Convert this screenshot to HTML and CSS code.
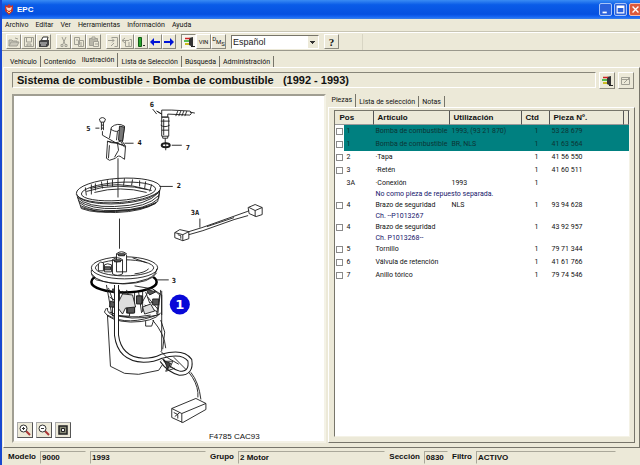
FILE: index.html
```html
<!DOCTYPE html>
<html lang="es">
<head>
<meta charset="utf-8">
<title>EPC</title>
<link rel="stylesheet" href="styles.css">
</head>
<body>
<header class="titlebar">
  <svg class="logo" viewBox="0 0 10 11"><path d="M1 1l2 1 2-2 2 2 2-1v6L5 11 1 7z" fill="#c8342a"/><path d="M2 3l3 1 3-1-1 3-2 1-2-1z" fill="#f3d9c8"/><path d="M3 7l2 2 2-2" stroke="#ffd36b" fill="none"/></svg>
  <h1>EPC</h1>
  <div class="winbtns">
    <button aria-label="Minimizar"><svg viewBox="0 0 13 13"><path d="M3 9h5v2H3z" fill="#fff"/></svg></button>
    <button aria-label="Maximizar"><svg viewBox="0 0 13 13"><path d="M2.500 2.500h8v8h-8zM2 4h9" stroke="#fff" stroke-width="1.300" fill="none"/></svg></button>
    <button class="close" aria-label="Cerrar"><svg viewBox="0 0 13 13"><path d="M3 3l7 7M10 3l-7 7" stroke="#fff" stroke-width="1.600"/></svg></button>
  </div>
</header>
<nav class="menu">
  <button>Archivo</button><button>Editar</button><button>Ver</button><button>Herramientas</button><button>Información</button><button>Ayuda</button>
</nav>
<div class="toolbar">
  <div class="group">
    <button aria-label="Abrir"><svg viewBox="0 0 12 12"><path d="M1 10V4h3l1 1h4v2M1 10l2-4h8l-2 4zM7 2l3 1" stroke="#a09f94" fill="#c9c7ba"/></svg></button>
    <button aria-label="Guardar"><svg viewBox="0 0 12 12"><path d="M1.500 1.500h9v9h-9zM3.500 2v4h5V2M4 8h4v2H4z" stroke="#a09f94" fill="none"/></svg></button>
    <button aria-label="Imprimir"><svg viewBox="0 0 12 12"><path d="M3 5l2-4h5L9 5" fill="#fff" stroke="#333"/><path d="M1 5l2-1h8v5l-2 2H1z" fill="#444"/><path d="M2 7h7M3 9h5" stroke="#ddd"/></svg></button>
  </div>
  <div class="group">
    <button aria-label="Cortar"><svg viewBox="0 0 12 12"><path d="M4 1l3 7M8 1L5 8M3 8.500h2v2H3zM7 8.500h2v2H7z" stroke="#a09f94" fill="none"/></svg></button>
    <button aria-label="Copiar"><svg viewBox="0 0 12 12"><path d="M1.500 1.500h5v7h-5zM5.500 4.500h5v6h-5zM3 4h2M7 7h2M7 9h2" stroke="#a09f94" fill="none"/></svg></button>
    <button aria-label="Pegar"><svg viewBox="0 0 12 12"><path d="M1.500 2.500h8v7h-8z" stroke="#a09f94" fill="#b9b7aa"/><path d="M4 1h3v2H4zM5.500 5.500h5v5h-5zM7 8h3" stroke="#a09f94" fill="#ece9d8"/></svg></button>
  </div>
  <div class="group wide">
    <button aria-label="Añadir"><svg viewBox="0 0 12 12"><path d="M4.500 1.500h6v9h-3M1 4.500h6M5 2.500l2 2-2 2M7 7l-3 3" stroke="#a09f94" fill="none"/></svg></button>
    <button aria-label="Quitar"><svg viewBox="0 0 12 12"><path d="M4.500 5v5.500h6v-7h-2M8 4.500H1M4 2L1 4.500 4 7M7 7h2M7 9h2" stroke="#a09f94" fill="none"/></svg></button>
    <button aria-label="Marcar"><svg viewBox="0 0 12 12"><path d="M3.500 1.500h3v9h-3z" fill="#27a52b" stroke="#145c17"/><path d="M8 9.500h2" stroke="#333"/></svg></button>
    <button aria-label="Anterior"><svg viewBox="0 0 12 12"><path d="M1 6l4-4v3h6v2H5v3z" fill="#0014d6"/></svg></button>
    <button aria-label="Siguiente"><svg viewBox="0 0 12 12"><path d="M11 6L7 2v3H1v2h6v3z" fill="#0014d6"/></svg></button>
  </div>
  <div class="group">
    <button class="pressed" aria-label="Salida"><svg viewBox="0 0 12 12"><path d="M6 2l4-1v10l-4-2z" fill="#333"/><path d="M2 2.500h5" stroke="#c22" stroke-width="1.500"/><path d="M1 5h5" stroke="#2a2" stroke-width="1.500"/><path d="M2 8h4" stroke="#cb2" stroke-width="2"/><path d="M8 10.500h4" stroke="#222"/></svg></button>
    <button class="tiny">VIN</button>
    <button class="tiny"><sup>D</sup>M<sub>S</sub></button>
  </div>
  <select aria-label="Idioma"><option>Español</option></select>
  <button class="help" aria-label="Ayuda">?</button>
  <i class="tail"></i>
</div>
<nav class="tabs">
  <button>Vehículo</button><button class="before">Contenido</button><button class="active">Ilustración</button><button>Lista de Selección</button><button>Búsqueda</button><button>Administración</button>
</nav>
<main>
  <div class="heading">
    <h2>Sistema de combustible - Bomba de combustible &nbsp; (1992 - 1993)</h2>
    <button aria-label="Salida"><svg viewBox="0 0 12 12"><path d="M6 2l4-1v10l-4-2z" fill="#333"/><path d="M2 2.500h5" stroke="#c22" stroke-width="1.500"/><path d="M1 5h5" stroke="#2a2" stroke-width="1.500"/><path d="M2 8h4" stroke="#cb2" stroke-width="2"/><path d="M8 10.500h4" stroke="#222"/></svg></button>
    <button aria-label="Nota"><svg viewBox="0 0 12 12"><path d="M1.500 2.500h8v7h-8zM1 4.500h8M4 8l6-6" stroke="#a09f94" fill="none"/></svg></button>
  </div>
  <div class="content">
    <figure>
      <svg class="drawing" viewBox="14 96 309 343" role="img" aria-label="Bomba de combustible">
        <g fill="none" stroke="#1c1c1c" stroke-width=".9">
          <!-- screw and cap -->
          <path d="M99 119q3-3 6 0l-1 3h-4zM101 122v8M103 122v8M101 125h2M101 128h2M102 131v4l14 8 6 2"/>
          <path d="M109 138l2-11q6-5 13-1l-2 15M110 129q5 3 7 2l7-4M117 131l-1 9M107 141q8 4 14-1l4 6-1 13-3-2q-3-3-6 1l-6 2-3-2 1-15zM109 145l-1 13M117 143l1 7-4 7M107 141l10 2 8 3M120 141l4 6"/>
          <path d="M119 126l-1 14 4 1 2-14z" fill="#777"/>
          <path d="M117.500 158v39M119 218v30M95 128h4M124 143h9"/>
          <!-- elbow valve -->
          <path d="M156 111l5 3v-4h10l18 1q3 2 0 4l-22-1v3h-6v-3zM161 117h7v19h-7zM160 121h9M160 125q4 3 9 0M161 130h7M162 136v2h5v-2M164.500 138v6M177 111l-2 5M180 111l-2 5M183 111l-2 5M186 111l-2 5"/>
          <path d="M163 119v16M189 112l5 1M152 109l4 5M171 145h10"/>
          <ellipse cx="165" cy="145" rx="4" ry="2" stroke-width="2"/>
          <path d="M165 142v8"/>
          <!-- collar -->
          <ellipse cx="118" cy="190" rx="42" ry="12" transform="rotate(-4 118 190)"/>
          <ellipse cx="118" cy="191" rx="37" ry="9" transform="rotate(-4 118 191)"/>
          <path d="M76 194q3 7 23 9 22 2 45-4 12-4 15-9l-1 8M77 197q10 10 37 9 33-1 44-14M78 200q12 9 38 8 31-1 42-13M79 202q10 9 36 8 32-1 43-12M80 205q13 7 35 7 28-1 41-10M81 207q14 5 34 4 25-1 40-8"/>
          <path d="M77 196l4 12q16 6 36 2 26 0 40-9l2-11"/>
          <path d="M85 187l1 8M91 184v10M95 183v7M101 181l1 7M107 180v6M112 179v7M124 178l-1 7M132 179l-1 6M139 180v6M145 181l-1 7M151 184l-2 7M90 188q27-8 57 1M86 191q30-10 65-1M94 192q26-7 52 0M159 186h13"/>
          <!-- cable -->
          <path d="M174 232l5-3 9 2v7l-6 2-8-3zM174 232l8 2v6M182 234l6-3M177 234l3 1v3M247 207l7-3 7 3v7l-6 2-7-3zM248 207l6 3 7-3M254 210v6M188 231l13-4 45-16 2-1M188 234l14-4 31-11 14-4M206 226l27-9M199 218v9"/>
          <!-- seal ring and pump flange -->
          <ellipse cx="123.500" cy="281" rx="32.500" ry="10.500" stroke="#000" stroke-width="2.500"/>
          <path d="M91 267v6q7 10 33 10 26-1 33-11v-5z" fill="#fff" stroke="none"/>
          <ellipse cx="124" cy="267" rx="33" ry="11" fill="#fff"/>
          <path d="M91 269q-1 6 5 10 27 8 51-1 9-4 9-10M91 273q7 10 33 10 26-1 32-11"/>
          <ellipse cx="124" cy="267" rx="29" ry="8"/>
          <path d="M116 253v18h10v-17M116 253q5-4 10 0-5 3-10 0M112 259v14q5 3 10 0v-14q-5-4-10 0 5 4 10 0M98 263v7h5v-8q-3-2-5 1M104 264v7h7v-7q-4-2-7 0M132 257l14 5M134 273q10-1 14-5" fill="#fff"/>
          <path d="M118 253h6v2h-6zM114 259h6v2h-6zM104 266h6v3h-6z" fill="#666"/>
          <path d="M156 279h12"/>
          <!-- pump mechanism -->
          <path d="M106 284l5 28q18 9 46 2l3-25M108 287l7 20M119 289v17M122 290v10l7 7M126 289l8 22M134 292v19M138 291l3 21M142 291v20M148 290l-8 14M152 288l7 6-3 19M147 296l10 12M109 296l11 7h11M112 306h17v9h-17zM126 304h7v8h-7zM136 295h6v7h-6zM145 291l4 11 8-1M144 304l13 7M134 285l18 3 9 6v20"/>
          <path d="M127 306h7v6h-7zM136 295h5v8h-5zM152 298h6v6h-6zM110 300l5 2v4h-6zM145 288l10 3-6 3zM112 288l7 1v3h-6z" fill="#555"/>
          <path d="M122 293l10 1 3 12-10 1-3 6-6-8zM142 306l8-3 4 7-10 3z" fill="#ddd"/>
          <path d="M106 307l-2 4q5 9 26 10 23 0 30-9M107 307q-1 6 10 9M109 311q15 8 41 3M145 320v5h6l2-6M107 314q20 12 52-1"/>
          <!-- reservoir -->
          <path d="M107 314l3 51 14 7 14 1 20-4 4-6M161 290v60M160 319l4 12-2 17"/>
          <path d="M116 284v50q3 24 27 25 10 0 18-4 21-6 28 4 2 13-10 13-11-3-18-13" stroke-width="5"/>
          <path d="M116 283v51q3 24 27 25 10 0 18-4 21-6 28 4 2 13-10 13-11-3-18-13" stroke="#fff" stroke-width="3"/>
          <path d="M160 350l6 6 12 7M162 358l5 7-2 5 9-3M163 360h9l-3 7M173 356l12 12"/>
          <path d="M164 360l6 2-3 6z" fill="#444"/>
          <path d="M152 319q12 14 13 28M188 371q8 10 9 20v5M190 371q8 10 10 27"/>
          <!-- float -->
          <path d="M171 407l24-10 10 5v6l-23 13-11-5zM171 407l10 5 24-10M181 412v9M173 411l4 2v4M174 415l5-4"/>
        </g>
        <g class="callouts">
          <text x="86" y="131">5</text><text x="137" y="145">4</text><text x="149" y="107">6</text><text x="185" y="150">7</text><text x="176" y="188">2</text><text x="190" y="214">3A</text><text x="171" y="282">3</text>
        </g>
        <circle cx="179" cy="303.500" r="10" fill="#0808d8"/>
        <text class="marker" x="179" y="308">1</text>
        <text class="code" x="208" y="437">F4785 CAC93</text>
      </svg>
      <div class="zoom">
        <button aria-label="Ampliar"><svg viewBox="0 0 12 12"><path d="M7 7l4 4" stroke="#a33" stroke-width="2"/><circle cx="4.500" cy="4.500" r="3.500" fill="#fff" stroke="#333"/><path d="M3 4.500h3M4.500 3v3" stroke="#333"/></svg></button>
        <button aria-label="Reducir"><svg viewBox="0 0 12 12"><path d="M7 7l4 4" stroke="#a33" stroke-width="2"/><circle cx="4.500" cy="4.500" r="3.500" fill="#fff" stroke="#333"/><path d="M3 4.500h3" stroke="#333"/></svg></button>
        <button aria-label="Ajustar"><svg viewBox="0 0 12 12"><path d="M2 2h8v8H2z" fill="#8a8c78" stroke="#222" stroke-width="1.500"/><path d="M4.500 4.500h3v3h-3z" fill="#eee" stroke="#222"/></svg></button>
      </div>
    </figure>
    <section class="side">
      <nav class="tabs sub">
        <button class="active">Piezas</button><button>Lista de selección</button><button>Notas</button>
      </nav>
      <div class="page">
        <div class="list">
          <table>
            <colgroup><col class="c-check"><col class="c-pos"><col class="c-art"><col class="c-use"><col class="c-qty"><col class="c-num"><col class="c-end"></colgroup>
            <thead><tr><th colspan="2">Pos</th><th>Artículo</th><th>Utilización</th><th>Ctd</th><th>Pieza Nº.</th><th></th></tr></thead>
            <tbody>
              <tr class="sel"><td><input type="checkbox" aria-label="Bomba de combustible 53 28 679"></td><td>1</td><td>Bomba de combustible</td><td>1993, (93 21 870)</td><td>1</td><td>53 28 679</td><td></td></tr>
              <tr class="sel"><td><input type="checkbox" aria-label="Bomba de combustible 41 63 564"></td><td>1</td><td>Bomba de combustible</td><td>BR, NLS</td><td>1</td><td>41 63 564</td><td></td></tr>
              <tr><td><input type="checkbox" aria-label="Tapa"></td><td>2</td><td>·Tapa</td><td></td><td>1</td><td>41 56 550</td><td></td></tr>
              <tr><td><input type="checkbox" aria-label="Retén"></td><td>3</td><td>·Retén</td><td></td><td>1</td><td>41 60 511</td><td></td></tr>
              <tr class="double"><td></td><td>3A</td><td>·Conexión<p>No como pieza de repuesto separada.</p></td><td>1993</td><td>1</td><td></td><td></td></tr>
              <tr class="double"><td><input type="checkbox" aria-label="Brazo de seguridad 93 94 628"></td><td>4</td><td>Brazo de seguridad<p>Ch. --P1013267</p></td><td>NLS</td><td>1</td><td>93 94 628</td><td></td></tr>
              <tr class="double"><td><input type="checkbox" aria-label="Brazo de seguridad 43 92 957"></td><td>4</td><td>Brazo de seguridad<p>Ch. P1013268--</p></td><td></td><td>1</td><td>43 92 957</td><td></td></tr>
              <tr><td><input type="checkbox" aria-label="Tornillo"></td><td>5</td><td>Tornillo</td><td></td><td>1</td><td>79 71 344</td><td></td></tr>
              <tr><td><input type="checkbox" aria-label="Válvula de retención"></td><td>6</td><td>Válvula de retención</td><td></td><td>1</td><td>41 61 766</td><td></td></tr>
              <tr><td><input type="checkbox" aria-label="Anillo tórico"></td><td>7</td><td>Anillo tórico</td><td></td><td>1</td><td>79 74 546</td><td></td></tr>
            </tbody>
          </table>
        </div>
      </div>
    </section>
  </div>
</main>
<footer>
  <b>Modelo</b><span class="model">9000</span><span class="year">1993</span><b>Grupo</b><span class="grow">2 Motor</span><b>Sección</b><span class="sec">0830</span><b>Filtro</b><span class="filter">ACTIVO</span>
</footer>
</body>
</html>
```
FILE: styles.css
```css
* { box-sizing: border-box; }
html { height: 100%; }
body {
  margin: 0; min-height: 100%; display: flex; flex-direction: column; overflow: hidden;
  background: #ece9d8; color: #111; border-left: 2px solid #1848d0; border-bottom: 2px solid #1238a8;
  font: 7px/11px Roboto, "Liberation Sans", sans-serif;
}
button { font: inherit; color: inherit; background: none; border: 0; padding: 0; margin: 0; white-space: nowrap; }
svg { display: block; }
h1, h2, p, figure { margin: 0; }

.titlebar {
  display: flex; align-items: center; gap: 3px; height: 19px; padding-left: 4px; margin-left: -2px;
  background: linear-gradient(#3a8cf4, #0a5ce8 25%, #0550e0 75%, #1464f4 88%, #3a80e8);
  color: #fff;
}
.logo { width: 10px; height: 11px; }
h1 { font: bold 8px/11px "Liberation Sans", sans-serif; }
.winbtns { display: flex; gap: 2px; margin-left: auto; margin-right: -2px; }
.winbtns button { width: 13px; height: 13px; border: 1px solid #a8c4f8; border-radius: 2px; background: #2c62dc; }
.winbtns .close { background: #dc5a3c; border-color: #f0c0b4; }
.winbtns svg { width: 11px; height: 11px; }

.menu { display: flex; gap: 7px; padding-left: 3px; height: 13px; border-bottom: 1px solid #c8c5b4; }
.toolbar { display: flex; align-items: center; gap: 5px; height: 19px; padding-left: 4px; border-top: 1px solid #fff; border-bottom: 1px solid #9a988c; }
.group { display: flex; }
.toolbar button, .heading button, .zoom button {
  display: grid; place-items: center; border: 1px solid; border-color: #fff #8c8a7e #8c8a7e #fff; background: #ece9d8;
}
.toolbar button { width: 15px; height: 15px; }
.group.wide button { width: 14px; }
.toolbar svg, .heading svg, .zoom svg { width: 12px; height: 12px; }
.toolbar .pressed { border-color: #8c8a7e #fff #fff #8c8a7e; background: #f8f6ee; }
.toolbar .tiny { display: block; font-size: 6px; }
.tiny sup, .tiny sub { font-size: 6px; line-height: 0; }
select {
  appearance: none; width: 88px; height: 14px; border: 1px solid; border-color: #77756a #fff #fff #77756a; border-radius: 0; padding: 0 1px; color: #222;
  font: 9px/12px "Liberation Sans", sans-serif;
  background: linear-gradient(#333, #333) right 3px top 5px / 5px 1px no-repeat, linear-gradient(#333, #333) right 4px top 6px / 3px 1px no-repeat, linear-gradient(#333, #333) right 5px top 7px / 1px 1px no-repeat, linear-gradient(#ece9d8, #ece9d8) right / 10px 100% no-repeat, #fff;
}
.toolbar .help { font: bold 11px/12px "Liberation Serif", serif; }
.tail { margin-left: 18px; height: 16px; border-left: 1px solid #d8d5c4; }

.tabs { display: flex; align-items: flex-end; height: 16px; padding-left: 4px; margin-left: 1px; }
.tabs button { padding: 0 3px; height: 11px; border-right: 1px solid #77756a; line-height: 10px; }
.tabs .before { border-right: 0; }
.tabs .active { height: 14px; line-height: 12px; }

main { flex: 1; display: flex; flex-direction: column; margin-left: 1px; padding: 4px 4px 4px 8px; border: 1px solid; border-color: #fff #77756a #77756a #fff; }
.heading { display: flex; gap: 3px; height: 18px; padding-right: 1px; }
h2 { flex: 1; border: 1px solid; border-color: #88867a #fff #fff #88867a; padding-left: 4px; font: bold 11px/14px "Liberation Sans", sans-serif; height: 16px; }
.heading button { width: 16px; height: 17px; }

.content { flex: 1; display: flex; gap: 2px; padding-top: 4px; }
figure { position: relative; flex: 312 0 0; background: #fff; border: 2px solid; border-color: #a09e92 #f4f2e6 #f4f2e6 #a09e92; }
.drawing { width: 100%; }
.drawing text { font: bold 7px "DejaVu Sans Mono", monospace; fill: #111; }
.drawing .marker { font: bold 13px "DejaVu Sans", sans-serif; fill: #fff; text-anchor: middle; }
.drawing .code { font: 8px "Liberation Sans", sans-serif; }
.zoom { position: absolute; left: 3px; bottom: 3px; display: flex; gap: 3px; }
.zoom button { width: 16px; height: 16px; border-color: #aaa #555 #555 #aaa; }

.side { flex: 308 0 0; min-width: 0; display: flex; flex-direction: column; }
.tabs.sub { height: 13px; padding-left: 0; margin: 0; }
.tabs.sub .active { height: 13px; line-height: 11px; }
.page { flex: 1; display: flex; padding: 2px 4px 5px 5px; border: 1px solid; border-color: #fff #77756a #77756a #fff; }
.list { flex: 1; min-width: 0; background: #fff; border: 1px solid; border-color: #77756a #f4f2e6 #f4f2e6 #77756a; }
table { width: 100%; table-layout: fixed; border-collapse: separate; border-spacing: 0; }
.c-check { width: 9px; } .c-pos { width: 29px; } .c-art { width: 76px; } .c-use { width: 72px; } .c-qty { width: 28px; } .c-end { width: 5px; }
th {
  height: 14px; padding: 0 0 0 4px; text-align: left; background: #ece9d8; border-right: 1px solid #555; border-bottom: 1px solid #999;
  font: bold 8px/12px "Liberation Sans", sans-serif; white-space: nowrap;
}
td { height: 13px; padding: 1px 0 0 2px; vertical-align: top; white-space: nowrap; }
td:first-child { padding: 3px 0 0 1px; background: #fff; }
td:nth-child(5) { text-align: center; }
.double td { height: 22px; }
td p { color: #15156a; line-height: 10px; }
.sel { background: #008080; color: #0c3434; }
input { appearance: none; display: block; width: 7px; height: 7px; margin: 0; border: 1px solid #8a8a8a; background: #fff; }

footer { display: flex; align-items: center; height: 17px; gap: 4px; padding: 2px 24px 0 6px; font: bold 8px/12px "Liberation Sans", sans-serif; }
footer span { height: 13px; padding-left: 1px; border: 1px solid; border-color: #aaa89a #ece9d8 #ece9d8 #aaa89a; }
.model { width: 46px; } .year { width: 116px; } .grow { flex: 1; } .sec { width: 24px; } .filter { width: 140px; }
```
